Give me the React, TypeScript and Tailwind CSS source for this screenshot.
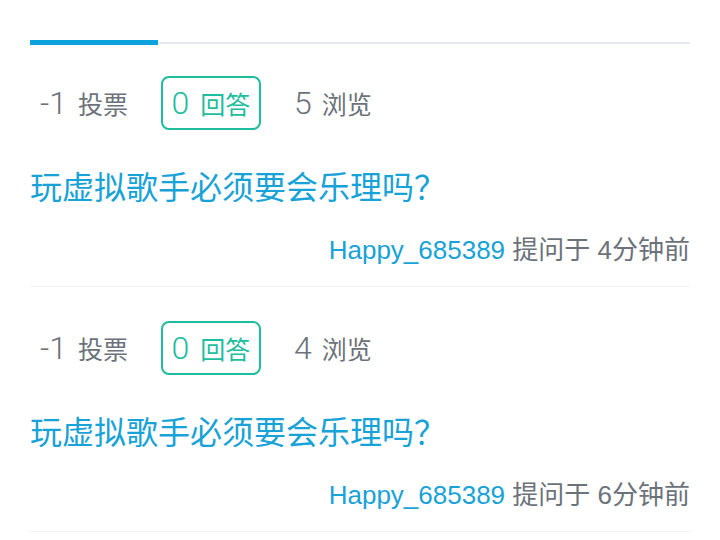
const questions = [
  { id: 1, votes: -1, answers: 0, views: 5, title: "玩虚拟歌手必须要会乐理吗？", user: "Happy_685389", time: "4分钟前" },
  { id: 2, votes: -1, answers: 0, views: 4, title: "玩虚拟歌手必须要会乐理吗？", user: "Happy_685389", time: "6分钟前" },
];

const font = { fontFamily: '"Helvetica Neue", "Liberation Sans", "Noto Sans CJK SC", sans-serif' };
const cjk = { fontFamily: '"Noto Sans CJK SC", sans-serif' };
const num = { fontFamily: 'Roboto, "Liberation Sans", sans-serif' };

export default function App() {
  return (
    <main className="min-h-screen bg-white px-[30px] pt-[40px]" style={font}>
      {/* tabs */}
      <div className="flex items-center">
        <div className="h-[5px] w-[128px] bg-[#0aa3dc]" />
        <div className="h-[2px] flex-1 bg-[#e6e9ee]" />
      </div>

      <div className="pt-[31px]">
        {questions.map((q, i) => (
          <div key={q.id} className={i > 0 ? "pt-[34px]" : ""}>
            <div className="flex h-[54px] items-center text-[#6b727a]">
              <div className="flex items-baseline pl-[10px] pr-[33px]">
                <span className="text-[32px] font-light" style={num}>{q.votes}</span>
                <span className="ml-[11px] text-[25px]" style={cjk}>投票</span>
              </div>
              <div className="flex h-[54px] w-[100px] items-center justify-center rounded-[8px] border-2 border-[#1dbd9d] text-[#1dbd9d]">
                <span className="flex items-baseline">
                  <span className="text-[32px] font-light" style={num}>{q.answers}</span>
                  <span className="ml-[11px] text-[25px]" style={cjk}>回答</span>
                </span>
              </div>
              <div className="flex items-baseline pl-[33px]">
                <span className="text-[32px] font-light" style={num}>{q.views}</span>
                <span className="ml-[10px] text-[25px]" style={cjk}>浏览</span>
              </div>
            </div>

            <h3 className="mt-[35px] text-[32px] leading-[40px] text-[#17a2d8]" style={cjk}>
              {q.title}
            </h3>

            <p className="mt-[29px] text-right text-[26px] leading-[32px] text-[#6b727a]">
              <span className="text-[#17a2d8]">{q.user}</span> 提问于 {q.time}
            </p>

            <div className="mt-[20px] h-px bg-[#eff1f4]" />
          </div>
        ))}
      </div>
    </main>
  );
}
